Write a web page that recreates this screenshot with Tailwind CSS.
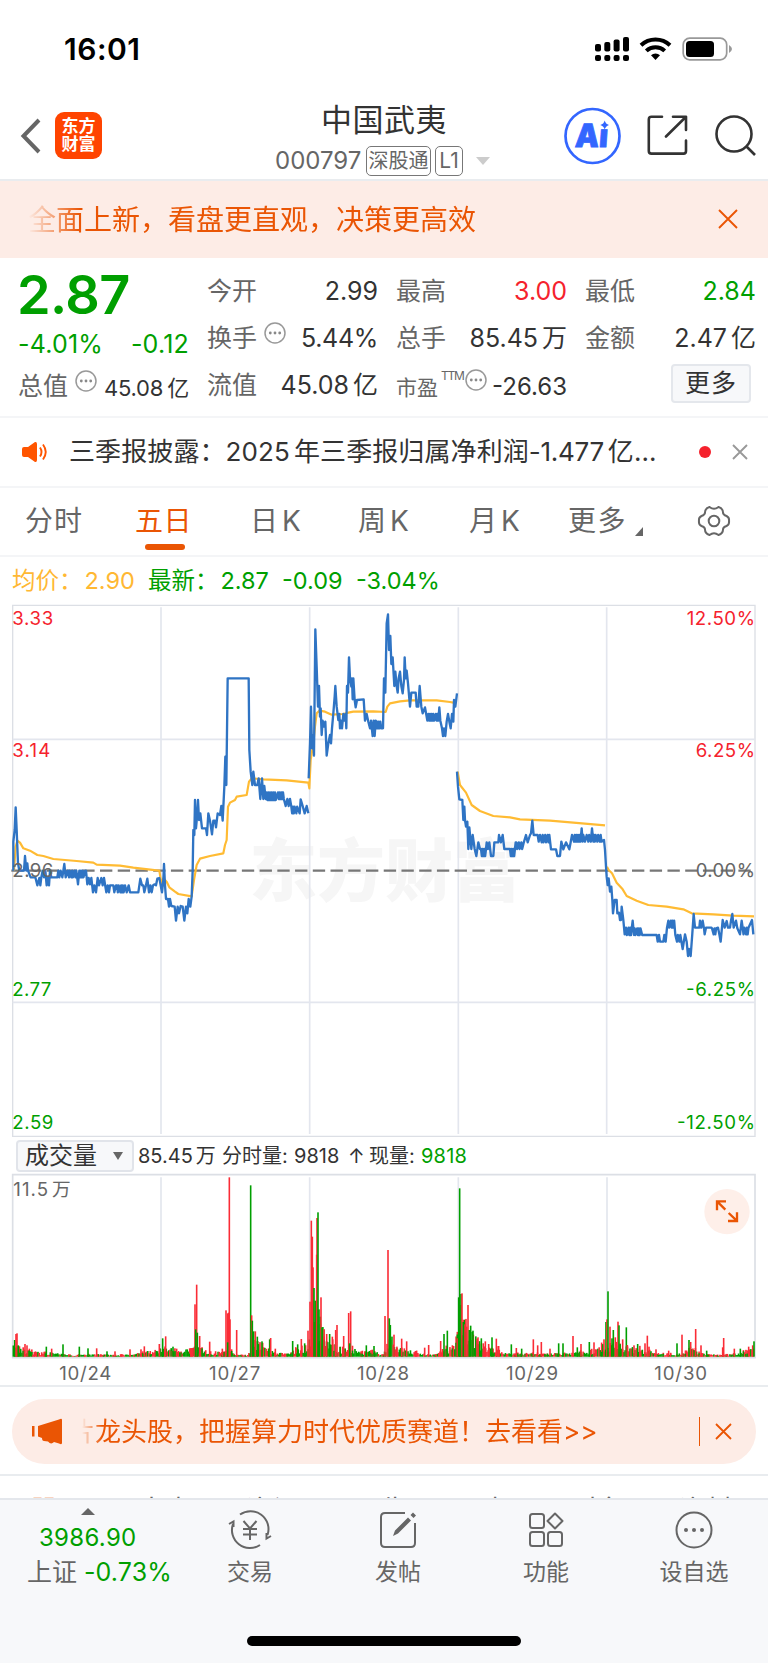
<!DOCTYPE html>
<html lang="zh-CN">
<head>
  <meta charset="UTF-8">
  <meta name="viewport" content="width=device-width, initial-scale=1.0">
  <title>中国武夷 000797</title>
  <script src="https://cdn.jsdelivr.net/npm/@tailwindcss/browser@4"></script>
</head>
<body class="w-[768px] h-[1663px] overflow-hidden bg-white text-[#333] font-['Inter','Noto_Sans_CJK_SC',sans-serif] whitespace-nowrap">
  <!-- Status bar -->
  <div class="h-[92px] flex items-start justify-between pl-[64px] pr-[36px]">
    <div class="mt-[31px] text-[30px] leading-[36px] font-semibold tracking-[0.5px] text-black">16:01</div>
    <svg class="mt-[36px]" width="138" height="27" viewBox="0 0 138 27">
      <g fill="#000">
        <rect x="1" y="8" width="6" height="7.5" rx="2"/><rect x="10.3" y="6" width="6" height="9.5" rx="2"/><rect x="19.6" y="3.5" width="6" height="12" rx="2"/><rect x="29" y="1" width="6" height="14.5" rx="2"/>
        <rect x="1" y="19" width="6" height="6" rx="2"/><rect x="10.3" y="19" width="6" height="6" rx="2"/><rect x="19.6" y="19" width="6" height="6" rx="2"/><rect x="29" y="19" width="6" height="6" rx="2"/>
        <path d="M61.500 24 L57 19.200 A6.600 6.600 0 0 1 66 19.200 Z"/>
      </g>
      <g fill="none" stroke="#000" stroke-width="4">
        <path d="M47 9.200 A21 21 0 0 1 76 9.200"/>
        <path d="M52.300 14.900 A13.500 13.500 0 0 1 70.700 14.900"/>
      </g>
      <rect x="89.200" y="2.200" width="43.500" height="21.600" rx="6.500" fill="none" stroke="#999" stroke-width="1.700"/>
      <rect x="92" y="5" width="28" height="16" rx="3.500" fill="#000"/>
      <path d="M135 9 Q138 11 138 13 Q138 15 135 17 Z" fill="#999"/>
    </svg>
  </div>

  <!-- Header -->
  <header class="h-[89px] flex border-b-2 border-[#e9ecef]">
    <div class="w-[250px] flex pt-[20px] pl-[20px]">
      <svg class="mt-[5px]" width="24" height="38" viewBox="0 0 24 38" fill="none" stroke="#666" stroke-width="4"><path d="M19 3 L3.500 19 L19 35"/></svg>
      <div class="ml-[11px] w-[47px] h-[47px] rounded-[9px] bg-[#ff4400] text-white text-[17px] leading-[18px] font-bold text-center pt-[5px]">东方<br>财富</div>
    </div>
    <div class="w-[268px] flex flex-col items-center">
      <h1 class="mt-[6px] text-[31px] leading-[44px] text-[#333] tracking-[0.5px]">中国武夷</h1>
      <div class="flex items-center h-[30px] mt-[4px] text-[#666] self-start ml-[25px]">
        <span class="w-[91px] text-[24px] leading-[30px]">000797</span>
        <span class="w-[65px] h-[30px] border border-[#777] rounded-[5px] text-[20px] leading-[28px] text-center">深股通</span>
        <span class="ml-[4px] w-[28px] h-[30px] border border-[#777] rounded-[5px] text-[21px] leading-[28px] text-center">L1</span>
        <svg class="ml-[13px]" width="14" height="8" viewBox="0 0 14 8"><path d="M0 0 H14 L7 8 Z" fill="#ccc"/></svg>
      </div>
    </div>
    <div class="flex pt-[15px] ml-[46px]">
      <svg width="58" height="58" viewBox="0 0 58 58">
        <circle cx="28.500" cy="29" r="27" fill="none" stroke="#3366ff" stroke-width="2.700"/>
        <text transform="translate(10.500 40) skewX(-4)" font-family="Inter" font-weight="900" font-size="32" fill="#3366ff" stroke="#3366ff" stroke-width="0.800" textLength="33" lengthAdjust="spacingAndGlyphs">Aı</text>
        <path d="M40.700 13.500 Q41.600 17 45 18 Q41.600 19 40.700 22.500 Q39.800 19 36.300 18 Q39.800 17 40.700 13.500 Z" fill="#3366ff"/>
      </svg>
      <svg class="ml-[25px] mt-[8px]" width="42" height="42" viewBox="0 0 42 42" fill="none" stroke="#333" stroke-width="2.600" stroke-linecap="round" stroke-linejoin="round">
        <path d="M15 1.800 H4.500 Q1.800 1.800 1.800 4.500 V36 Q1.800 38.600 4.500 38.600 H36.500 Q39 38.600 39 36 V25.500"/>
        <path d="M26 1.800 H39 V15 M39 1.800 L19 21.500"/>
      </svg>
      <svg class="ml-[25px] mt-[7px]" width="44" height="44" viewBox="0 0 44 44" fill="none" stroke="#333" stroke-width="2.600">
        <circle cx="20" cy="20" r="17.500"/><path d="M32 32 L41 41"/>
      </svg>
    </div>
  </header>

  <!-- Top banner -->
  <div class="h-[77px] bg-[#fdece6] text-[#ea5504] flex items-center justify-between pl-[28px] pr-[30px]">
    <div class="text-[28px] leading-[40px] [mask-image:linear-gradient(to_right,transparent,black_52px)]">全面上新，看盘更直观，决策更高效</div>
    <svg class="mb-[2px]" width="20" height="20" viewBox="0 0 20 20" stroke="#ea5504" stroke-width="1.900"><path d="M1 1 L19 19 M19 1 L1 19"/></svg>
  </div>

  <!-- Quote summary -->
  <section class="h-[160px] border-b-2 border-[#f4f5f7] grid grid-cols-[171px_171px_171px_171px] gap-x-[18px] px-[18px] text-[25px]">
    <div>
      <div class="-ml-px mt-[5px] h-[64px] text-[54px] leading-[64px] font-semibold tracking-[-0.6px] text-[#009f00]">2.87</div>
      <div class="h-[36px] flex items-center justify-between text-[25px] text-[#009f00] tracking-[0.2px]"><span>-4.01%</span><span>-0.12</span></div>
      <div class="h-[47px] flex items-center text-[#666]">
        <span>总值</span>
        <svg class="ml-[7px] mb-[12px]" width="22" height="22" viewBox="0 0 22 22"><circle cx="11" cy="11" r="10" fill="none" stroke="#999" stroke-width="1.500"/><g fill="#888"><circle cx="6.300" cy="11" r="1.400"/><circle cx="11" cy="11" r="1.400"/><circle cx="15.700" cy="11" r="1.400"/></g></svg>
        <span class="ml-auto text-[22px] text-[#333] tracking-[-0.2px] pt-[4px]">45.08<span class="ml-[4px]">亿</span></span>
      </div>
    </div>
    <div class="pt-[10px] text-[#666]">
      <div class="h-[47px] flex items-center justify-between"><span>今开</span><span class="text-[#333]">2.99</span></div>
      <div class="h-[47px] flex items-center">
        <span>换手</span>
        <svg class="ml-[7px] mb-[12px]" width="22" height="22" viewBox="0 0 22 22"><circle cx="11" cy="11" r="10" fill="none" stroke="#999" stroke-width="1.500"/><g fill="#888"><circle cx="6.300" cy="11" r="1.400"/><circle cx="11" cy="11" r="1.400"/><circle cx="15.700" cy="11" r="1.400"/></g></svg>
        <span class="ml-auto text-[#333] tracking-[-0.3px]">5.44%</span>
      </div>
      <div class="h-[47px] flex items-center justify-between"><span>流值</span><span class="text-[#333]">45.08<span class="ml-[4px]">亿</span></span></div>
    </div>
    <div class="pt-[10px] text-[#666]">
      <div class="h-[47px] flex items-center justify-between"><span>最高</span><span class="text-[#f5222d]">3.00</span></div>
      <div class="h-[47px] flex items-center justify-between"><span>总手</span><span class="text-[#333]">85.45<span class="ml-[4px]">万</span></span></div>
      <div class="h-[47px] flex items-center">
        <span class="text-[21px] pt-[4px]">市盈</span>
        <span class="ml-[3px] mb-[19px] text-[12px] leading-[14px] tracking-[-1.300px]">TTM</span>
        <svg class="ml-[2px] mb-[12px]" width="22" height="22" viewBox="0 0 22 22"><circle cx="11" cy="11" r="10" fill="none" stroke="#999" stroke-width="1.500"/><g fill="#888"><circle cx="6.300" cy="11" r="1.400"/><circle cx="11" cy="11" r="1.400"/><circle cx="15.700" cy="11" r="1.400"/></g></svg>
        <span class="ml-auto text-[24px] text-[#333] pt-[3px]">-26.63</span>
      </div>
    </div>
    <div class="pt-[10px] text-[#666]">
      <div class="h-[47px] flex items-center justify-between"><span>最低</span><span class="text-[#009f00]">2.84</span></div>
      <div class="h-[47px] flex items-center justify-between"><span>金额</span><span class="text-[#333]">2.47<span class="ml-[4px]">亿</span></span></div>
      <div class="h-[47px] flex items-center justify-end pr-[5px]"><span class="w-[80px] h-[39px] mb-[4px] rounded-[4px] border-2 border-[#e4e7ec] bg-[#f7f8fa] text-[#333] leading-[34px] text-center tracking-[1px]">更多</span></div>
    </div>
  </section>

  <!-- News line -->
  <div class="h-[70px] border-b-2 border-[#f4f5f7] flex items-center pl-[21px] pr-[20px]">
    <svg width="28" height="22" viewBox="0 0 28 22">
      <path d="M1 8 Q1 6 3 6 H7 L14 1 Q16 0.500 16 3 V19 Q16 21.500 14 21 L7 16 H3 Q1 16 1 14 Z" fill="#ff5500"/>
      <path d="M19 6.500 Q22 11 19 15.500 M22 3.500 Q27.500 11 22 18.500" fill="none" stroke="#ff5500" stroke-width="1.900"/>
    </svg>
    <div class="ml-[20px] w-[600px] text-[26px] leading-[40px] text-[#333] tracking-[0.1px]">三季报披露：<span>2025</span><span class="ml-[4px]">年三季报归属净利润</span><span class="tracking-[-0.3px]">-1.477</span><span class="ml-[4px]">亿...</span></div>
    <div class="ml-auto w-[12px] h-[12px] rounded-full bg-[#f5222d]"></div>
    <svg class="ml-[21px]" width="16" height="16" viewBox="0 0 16 16" stroke="#999" stroke-width="1.900"><path d="M1 1 L15 15 M15 1 L1 15"/></svg>
  </div>

  <!-- Period tabs -->
  <nav class="h-[69px] border-b-2 border-[#f4f5f7] flex text-[28px] leading-[40px] text-[#666] pt-[13px] pl-[25px]">
    <div class="w-[110px] tracking-[1px]">分时</div>
    <div class="w-[115px] text-[#ea5504]">
      <div class="tracking-[0.5px]">五日</div>
      <div class="ml-[10px] mt-[3px] w-[40px] h-[6px] rounded-full bg-[#ea5504]"></div>
    </div>
    <div class="w-[108px]">日<span class="ml-[4px]">K</span></div>
    <div class="w-[111px]">周<span class="ml-[4px]">K</span></div>
    <div class="w-[99px]">月<span class="ml-[4px]">K</span></div>
    <div class="w-[129px] flex"><span class="tracking-[1.500px]">更多</span><svg class="ml-[8px] mt-[26px]" width="8" height="9" viewBox="0 0 8 9"><path d="M8 0 V9 H0 Z" fill="#666"/></svg></div>
    <svg class="mt-[3px]" width="34" height="34" viewBox="0 0 34 34" fill="none" stroke="#666" stroke-width="2">
      <circle cx="17" cy="17" r="5.300"/>
      <path d="M12.500 3 Q17 6.500 21.500 3 Q26 4.500 26 8.500 Q26 10.800 29.500 12 Q32.500 13.500 32 17 Q32.500 20.500 29.500 22 Q26 23.200 26 25.500 Q26 29.500 21.500 31 Q17 27.500 12.500 31 Q8 29.500 8 25.500 Q8 23.200 4.500 22 Q1.500 20.500 2 17 Q1.500 13.500 4.500 12 Q8 10.800 8 8.500 Q8 4.500 12.500 3 Z"/>
    </svg>
  </nav>

  <!-- Chart legend -->
  <div class="h-[43px] flex items-center pl-[12px] pt-[4px] text-[23.500px] text-[#009f00]">
    <span class="w-[136px] text-[#ffb833]">均价：<span class="ml-[2px]">2.90</span></span>
    <span class="w-[134px]">最新：<span class="ml-[2px]">2.87</span></span>
    <span class="w-[74px]">-0.09</span>
    <span>-3.04%</span>
  </div>

  <!-- Price chart -->
  <svg class="block" width="768" height="538" viewBox="0 0 2304 1614" font-family="Inter, 'Noto Sans CJK SC', sans-serif" font-size="56">
    <text x="748" y="888" font-size="204" font-weight="900" fill="#f6f6f6" textLength="814">东方财富</text>
    <g stroke="#e3e6ee" stroke-width="5" fill="none">
      <path d="M38 16 H2265 V1609 H38 Z" stroke="#dcdfe5" stroke-width="4"/>
      <path d="M483 22 V1602 M929 22 V1602 M1375 22 V1602 M1820 22 V1602 M38 418 H2265 M38 1207 H2265"/>
    </g>
    <path d="M34 812 H2265" stroke="#777" stroke-width="7" stroke-dasharray="37 16.200"/>
    <g fill="none" stroke-linejoin="round">
      <g id="avg" stroke="#ffbb33" stroke-width="6.500"></g>
      <g id="price" stroke="#2f74c4" stroke-width="7"></g>
    </g>
    <g fill="#f5222d">
      <text x="37" y="74" textLength="123">3.33</text><text x="37" y="472" textLength="114">3.14</text>
      <text x="2265" y="74" text-anchor="end" textLength="205">12.50%</text><text x="2265" y="471" text-anchor="end" textLength="178">6.25%</text>
    </g>
    <g fill="#666">
      <text x="37" y="831" textLength="123">2.96</text><text x="2265" y="831" text-anchor="end" textLength="178">0.00%</text>
    </g>
    <g fill="#009f00">
      <text x="37" y="1189" textLength="117">2.77</text><text x="37" y="1586" textLength="123">2.59</text>
      <text x="2265" y="1189" text-anchor="end" textLength="207">-6.25%</text><text x="2265" y="1586" text-anchor="end" textLength="234">-12.50%</text>
    </g>
  </svg>

  <!-- Volume toolbar -->
  <div class="h-[34px] flex items-center pl-[16px] pt-[2px] text-[20px] leading-[30px]">
    <div class="w-[118px] h-[32px] border-2 border-[#e1e4ea] rounded-[4px] bg-[#f7f8fa] flex items-center justify-between pl-[7px] pr-[9px] text-[24px]">成交量<svg width="10" height="8" viewBox="0 0 10 8"><path d="M0 0 H10 L5 8 Z" fill="#666"/></svg></div>
    <span class="ml-[4px] w-[84px]">85.45<span class="ml-[3px]">万</span></span>
    <span class="w-[72px]">分时量:</span>
    <span class="w-[54px]">9818</span>
    <span class="w-[21px]">↑</span>
    <span class="w-[52px]">现量:</span>
    <span class="text-[#009f00] tracking-[0.2px]">9818</span>
  </div>

  <!-- Volume chart -->
  <svg class="block" width="768" height="213" viewBox="0 126 2304 639" font-family="Inter, 'Noto Sans CJK SC', sans-serif">
    <g stroke="#e3e6ee" stroke-width="5" fill="none">
      <path d="M38 134 H2265 V683 H38 Z" stroke="#dcdfe5" stroke-width="5"/>
      <path d="M483 142 V680 M929 142 V680 M1375 142 V680 M1821 142 V680"/>
    </g>
    <g id="volume"></g>
    <text x="40" y="199" font-size="56" fill="#666" textLength="104">11.5</text><text x="156" y="199" font-size="56" fill="#666">万</text>
    <circle cx="2181" cy="245" r="68" fill="#feefe9"/>
    <path d="M2151 241 V214 H2178 M2152 215 L2176 239 M2184 273 H2211 V247 M2210 272 L2186 249" fill="none" stroke="#ea5504" stroke-width="7"/>
    <g font-size="56" fill="#666" text-anchor="middle">
      <text x="256" y="749" textLength="156">10/24</text><text x="704" y="749" textLength="154">10/27</text><text x="1149" y="749" textLength="156">10/28</text><text x="1596" y="749" textLength="156">10/29</text><text x="2042" y="749" textLength="158">10/30</text>
    </g>
  </svg>

  <!-- Promo strip -->
  <div class="h-[91px] border-t-2 border-b-2 border-[#e9ecef] px-[12px] pt-[12px]">
    <div class="h-[65px] rounded-full bg-[#fdece6] text-[#ea5504] flex items-center pl-[20px] pr-[24px]">
      <svg width="30" height="28" viewBox="0 0 30 28" fill="#ea5504"><path d="M0 8 H2.500 V18.500 H0 Z M6 8 L27 1.500 Q30 0 30 2 V25 Q30 27 27 25.500 L22 24 Q19 27 16 23.500 L12 23 Q10 23 10 20 L6 18.500 Z"/></svg>
      <div class="ml-[20px] w-[540px] overflow-hidden text-[26px] leading-[40px] [mask-image:linear-gradient(to_right,transparent,black_20px)]"><span class="-ml-[13px]">片龙头股，把握算力时代优质赛道！去看看&gt;&gt;</span></div>
      <div class="ml-auto w-[1.500px] h-[29px] bg-[#ea5504]"></div>
      <svg class="ml-[15px]" width="17" height="17" viewBox="0 0 17 17" stroke="#ea5504" stroke-width="1.800"><path d="M1 1 L16 16 M16 1 L1 16"/></svg>
    </div>
  </div>

  <!-- Section tabs, mostly hidden behind the bottom bar -->
  <div class="h-[22px] overflow-hidden pt-[15px] pl-[31px] flex text-[27px] leading-[40px] text-[#666]">
    <span class="w-[107px] text-[#ea5504] font-medium">股吧</span><span class="w-[108px]">大事</span><span class="w-[108px]">资讯</span><span class="w-[108px]">公告</span><span class="w-[109px]">研报</span><span class="w-[108px]">财务</span><span>资料</span>
  </div>

  <!-- Bottom bar -->
  <footer class="h-[165px] bg-[#f7f8fa] border-t-2 border-[#e4e7ec]">
    <div class="flex h-[136px] pl-[14px] text-[#666]">
      <div class="w-[162px] flex flex-col pt-[8px]">
        <svg class="ml-[67px]" width="14" height="7" viewBox="0 0 14 7"><path d="M7 0 L14 7 H0 Z" fill="#666"/></svg>
        <div class="ml-[25px] mt-[7px] text-[24px] leading-[32px] tracking-[0.3px] text-[#009f00]">3986.90</div>
        <div class="ml-[13px] mt-px text-[25px] leading-[34px]">上证<span class="ml-[7px] text-[25px] text-[#009f00] tracking-[0.1px]">-0.73%</span></div>
      </div>
      <div class="w-[148px] flex flex-col items-center pt-[10px]">
        <svg width="44" height="40" viewBox="0 0 44 40" fill="none" stroke="#666" stroke-width="2">
          <path d="M12 4.500 A18 18 0 0 1 39.500 25 M32 35 A18 18 0 0 1 5 14"/>
          <path d="M1 14 L5.500 11.500 V17 M43 26 L38.500 28.500 V23"/>
          <path d="M15.500 11 L22 18.500 L28.500 11 M22 18.500 V30 M15 19 H29 M15 24.500 H29"/>
        </svg>
        <span class="mt-[6px] text-[23px] leading-[32px]">交易</span>
      </div>
      <div class="w-[148px] flex flex-col items-center pt-[10px]">
        <svg width="38" height="40" viewBox="0 0 38 40" fill="none" stroke="#666" stroke-width="2">
          <path d="M26 3 H6 Q2 3 2 7 V33 Q2 37 6 37 H32 Q36 37 36 33 V13"/>
          <path d="M14 26 L16 20.500 L29 7.500 L32 10.500 L19 23.500 Z M31.500 5 L34 2.500 L37 5.500 L34.500 8 Z" fill="#666" stroke="none"/>
        </svg>
        <span class="mt-[6px] text-[23px] leading-[32px]">发帖</span>
      </div>
      <div class="w-[148px] flex flex-col items-center pt-[10px]">
        <svg width="36" height="40" viewBox="0 0 36 40" fill="none" stroke="#666" stroke-width="2">
          <rect x="2" y="4" width="14" height="14" rx="2.500"/><rect x="2" y="22" width="14" height="14" rx="2.500"/><rect x="20" y="22" width="14" height="14" rx="2.500"/>
          <path d="M27 3.500 L34.500 11 L27 18.500 L19.500 11 Z" stroke-linejoin="round"/>
        </svg>
        <span class="mt-[6px] text-[23px] leading-[32px]">功能</span>
      </div>
      <div class="w-[148px] flex flex-col items-center pt-[10px]">
        <svg width="40" height="40" viewBox="0 0 40 40"><circle cx="20" cy="20" r="17.500" fill="none" stroke="#666" stroke-width="2"/><g fill="#666"><circle cx="12" cy="20" r="2"/><circle cx="20" cy="20" r="2"/><circle cx="28" cy="20" r="2"/></g></svg>
        <span class="mt-[6px] text-[23px] leading-[32px]">设自选</span>
      </div>
    </div>
    <div class="mx-auto w-[274px] h-[10px] rounded-full bg-black"></div>
  </footer>

  <script>
    const NS = 'http://www.w3.org/2000/svg';

    // Small fixed-seed generator, so the chart is the same on each load
    let seed = 7;
    function rnd() {
      seed = (seed * 16807) % 2147483647;
      return seed / 2147483647;
    }

    // "x,y" is a point; "x0-x1:a/b" swings between a and b
    function addLine(id, text) {
      const pts = [];
      text.trim().split(/\s+/).forEach(t => {
        const m = t.match(/^(\d+)-(\d+):(\d+)\/(\d+)$/);
        if (!m) { pts.push(t); return; }
        let up = true;
        for (let x = +m[1]; x <= +m[2]; x += rnd() < 0.25 ? 5 : 2.5) {
          pts.push(x + ',' + (up ? m[3] : m[4]));
          up = !up;
        }
      });
      const line = document.createElementNS(NS, 'polyline');
      line.setAttribute('points', pts.join(' '));
      document.getElementById(id).appendChild(line);
    }

    addLine('price', `40,812 40,725 44,690 47,622 50,690 54,790 58,812 72,812 75,768 79,812 82,790 84,812 92,832 106,832 112,856 118,834 121,856 124,832 128,812 132,832 136,812 140,856 144,834 147,856 150,812 154,832 172,832 175,812 178,832 182,812 187,832
      190,812 193,792 197,832 203,812 207,832 209-232:812/832 234,853 238-256:812/832 258,812 262,853 266,834 270,853 274,834 279,877 283,856 288,877 293,834 297,856 304,834 308,856 312,834 315,853 319,877 323,856 327,877 330,856 340,856 343,877 348,856
      351-372:856/877 375,856 380,877 386,856 390,877 415,877 421,836 426,856 430,856 433,877 438,856 442,836 447,877 451,856 455,877 459,856 463,853 468,856 472,836 478,834 482,856 486,877 490,840 492,792 495,856 498,897 504,897 507,920 510,897 514,918 524,920 528,962 533,920 537,940 542,918 548,920
      553,962 558,920 562,940 566,897 571,920 575,889 578,812 580,690 583,705 585,600 588,685 592,640 594,600 597,660 601,640 606,685 618,685 621,705 625,640 630,662 636,703 640,662 645,662 648,682 653,640 660,645 664,618 668,662 673,560 676,470 679,555 683,235 746,235 748,450 752,515 757,555
      760,515 765,555 772,555 776,535 781,597 786,535 790,597 793,558 797,597 800-832:577/600 834-854:577/597 857,618 862,597 866,618 870,597 874-896:620/640 899,640 902,598 908,618 914,640 920,618 925,640`);
    addLine('price', `926,535 930,430 933,320 936,445 939,407 942,467 946,88 950,200 954,320 957,258 960,350 962,325 965,405 968,362 972,380 976,365 980,467 985,430 990,405 993,430 996,385 1000,340 1004,290 1006,258 1010,320 1015,360 1018,342 1020,385 1023,362 1026,385 1030,342 1034,362 1037,342 1039,385 1041,258 1044,278
      1047,172 1050,235 1054,260 1056,235 1058,298 1060,235 1064,300 1067,322 1071,300 1091,298 1095,362 1100,342 1105,365 1110,385 1113,362 1118,408 1121,362 1124,408 1127,362 1129,385 1131-1147:365/385 1149,385 1152,235 1156,278 1160,70 1164,43 1167,150 1171,108 1174,192 1178,172 1183,258 1186,215 1190,258
      1193,278 1196,235 1200,215 1204,258 1208,280 1212,240 1214,172 1217,235 1220,212 1224,250 1230,320 1234,278 1247,278 1250,320 1255,320 1259,258 1264,320 1268,340 1275,322 1282,362 1285-1316:342/362 1318,322 1321,362 1326,385 1329,408 1332,385 1336,408 1340,365 1344,342 1348,365 1352,385 1356,342 1360,365 1362,300 1366,320 1371,280`);
    addLine('price', `1371,515 1374,560 1378,598 1387,600 1390,660 1393,620 1395,660 1398,680 1402,665 1405,747 1408,682 1414,747 1418,705 1424,747 1429,768 1435,727 1440,747 1443-1458:747/768 1460,727 1464,747 1468,727 1473,768 1480,768 1483,727 1495,727 1497,705 1503,727 1508,705 1513,747 1528,747 1530-1543:747/768 1547,727
      1549-1575:727/747 1578,705 1583,727 1590,705 1593,700 1597,662 1601,705 1613,705 1616,725 1620,705 1625,727 1628-1648:705/727 1653,748 1668,748 1672,768 1680,768 1684,725 1690,748 1698,727 1708,748 1712,727 1716,705 1722,725 1724-1742:705/725 1745,685 1748,725 1750-1774:705/725 1776,685 1780,725 1782-1808:705/725
      1812,720 1815,750 1818,800 1820,830 1823,855 1826,835 1830,875 1834,860 1837,900 1839,940 1844,900 1850,900 1852,940 1857,938 1860,960 1863,960 1865,920 1870,960 1874,1003 1878-1895:983/1005 1898,962 1902,1005 1904-1928:985/1005 1930,1005 1970,1005 1973,1025 1977,1005 1980,1025 1990,1025 1993,1005 1997,1025 2001,983 2005-2024:962/983
      2026-2042:1005/1025 2048,1047 2055,1003 2060,1025 2064,1068 2067,1047 2072,1068 2077,1000 2081,942 2085,983 2098,983 2100,962 2104,983 2108,962 2112,985 2114,1003 2118,983 2134,983 2136-2150:985/1003 2154,983 2158,1003 2162,1025 2168,960 2174,983 2180,963 2184,983 2190,983 2193,962 2197,942 2201,983 2208,962 2212,985 2220,1003 2225,962 2228-2250:983/1003 2256,960 2260,1003`);

    addLine('avg', `42,812 47,740 52,722 60,728 70,745 90,752 112,765 130,768 160,777 230,783 280,788 290,794 360,797 400,803 470,811 478,812 484,850 490,835 500,845 508,862 525,875 535,882 575,889 582,840 590,795 600,776 630,768 670,760 675,735 680,720 684,620 690,608 705,600 710,590 740,585 747,545 755,535 790,538 860,541 925,548 928,565
      932,480 940,430 945,380 950,340 958,332 975,335 995,344 1030,342 1045,338 1060,335 1120,334 1157,336 1162,320 1170,310 1200,304 1230,301 1310,301 1350,306 1360,308`);
    addLine('avg', `1373,515 1380,555 1398,578 1415,615 1440,633 1480,648 1530,652 1560,658 1650,662 1720,668 1815,676`);
    addLine('avg', `1821,800 1826,810 1836,820 1850,848 1868,868 1880,888 1910,902 1945,915 2000,920 2050,928 2075,940 2140,943 2200,947 2262,949`);

    const vol = document.getElementById('volume');
    const BASE = 680;
    function bar(x, top, color) {
      const r = document.createElementNS(NS, 'rect');
      r.setAttribute('x', x - 2.4);
      r.setAttribute('y', top);
      r.setAttribute('width', 4.8);
      r.setAttribute('height', BASE - top);
      r.setAttribute('fill', color === 'r' ? '#fa2c36' : '#009f00');
      vol.appendChild(r);
    }

    // Background volume: [x, usual height]
    const level = [[40, 28], [60, 22], [90, 16], [120, 10], [150, 12], [200, 5], [300, 6], [400, 5], [430, 12], [500, 24], [540, 12], [580, 25], [605, 24], [620, 10], [680, 14], [695, 14], [705, 4], [745, 5], [765, 50], [800, 22], [840, 10], [870, 8], [885, 22], [925, 26], [935, 90], [965, 90], [980, 36], [1000, 34], [1030, 18],
      [1050, 30], [1080, 12], [1120, 14], [1150, 5], [1170, 60], [1190, 24], [1230, 16], [1270, 8], [1310, 5], [1330, 20], [1365, 24], [1380, 105], [1420, 55], [1450, 25], [1490, 22], [1520, 8], [1570, 8], [1650, 8], [1720, 10], [1780, 16], [1810, 30], [1840, 36], [1880, 26], [1920, 22], [1970, 8], [2050, 8], [2070, 24], [2110, 8], [2160, 4], [2200, 7], [2263, 20]];
    for (let x = 40; x < 2263; x += 3.7) {
      let i = 1;
      while (level[i][0] < x) i++;
      const a = level[i - 1], b = level[i];
      const h = a[1] + (b[1] - a[1]) * (x - a[0]) / (b[0] - a[0]);
      if (rnd() < 0.3) bar(x, BASE - h * (1 + rnd() * 0.6), 'r');
      bar(x, BASE - h * (0.4 + rnd() * 0.9), rnd() < 0.4 ? 'r' : 'g');
    }

    const peaks = `44,630,g 48,612,r 51,610,r 55,646,g 75,642,r 81,646,r 139,650,g 155,656,r 189,643,g 238,650,g 264,655,g 290,655,r 321,664,g 345,664,r 390,658,r 423,658,r 433,649,r 478,642,r 488,625,g 497,619,r 519,650,g 530,656,r 585,523,r 590,464,r 587,598,g 592,608,g 599,618,r 629,635,r 667,656,r
      678,541,r 683,550,r 688,142,r 686,548,r 690,568,r 683,637,g 710,600,r 752,166,g 755,556,r 757,572,g 761,604,g 766,604,r 772,620,g 786,634,g 809,628,g 812,624,r 826,656,r 878,633,g 893,643,g 904,627,r 914,640,g 924,602,r 930,515,r 934,272,r 937,320,r 939,412,r 942,474,g 946,512,g 950,374,r 951,264,r 954,247,g
      957,538,g 961,560,g 963,502,r 966,592,g 972,620,r 980,612,r 989,612,g 997,620,r 1007,600,r 1011,585,r 1031,618,r 1046,549,r 1052,544,r 1049,640,g 1099,646,g 1122,648,g 1155,558,r 1164,360,r 1168,565,g 1171,585,g 1182,614,r 1205,626,r 1220,634,r 1274,653,r 1286,645,r 1322,633,r 1332,612,g 1342,602,g 1372,625,r
      1376,502,g 1379,175,g 1383,492,g 1386,490,r 1390,576,g 1395,583,r 1400,590,r 1404,525,r 1408,600,g 1412,587,g 1419,602,g 1434,622,r 1444,625,g 1456,634,r 1466,642,r 1476,622,g 1489,626,r 1496,648,r 1534,643,g 1549,654,r 1565,656,g 1600,628,r 1613,646,r 1624,636,r 1650,656,r 1676,640,g 1689,640,g 1719,618,r 1732,652,g
      1743,642,r 1768,636,g 1782,637,r 1812,628,r 1818,576,g 1821,568,r 1824,484,g 1830,590,r 1836,625,g 1840,600,g 1846,622,r 1854,575,r 1857,586,g 1868,628,r 1879,592,g 1882,645,r 1902,646,r 1913,642,g 1935,640,r 1942,617,r 1947,650,r 1968,658,r 2006,662,r 2031,640,g 2046,614,r 2067,630,g 2072,636,r 2087,597,r
      2103,646,r 2120,662,g 2168,652,r 2171,624,r 2203,656,r 2221,656,g 2246,650,r 2258,646,r 2262,634,g`;
    peaks.split(/\s+/).forEach(p => {
      const [x, top, color] = p.split(',');
      bar(+x, +top, color);
    });
  </script>
</body>
</html>
